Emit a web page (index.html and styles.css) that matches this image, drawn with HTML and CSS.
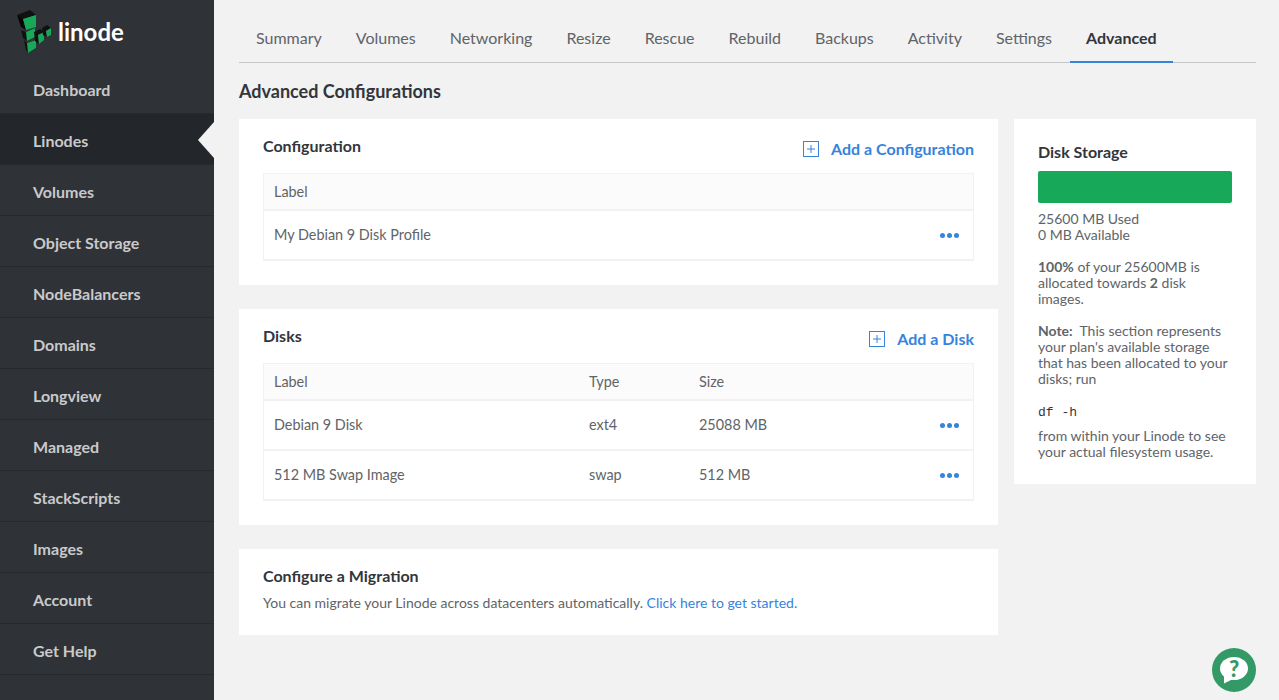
FILE: index.html
```html
<!DOCTYPE html>
<html lang="en">
<head>
  <meta charset="UTF-8" />
  <title>Linode - Advanced</title>
  <link rel="stylesheet" href="styles.css">
</head>
<body>
  <nav class="sidebar">
    <div class="logo">
      <svg class="logo-mark" width="36" height="43" viewBox="0 0 36 43" aria-hidden="true">
        <polygon points="0,5 13,0 19,5 6,9" fill="#111"/>
        <polygon points="0,5 6,9 9,20 4,17" fill="#060606"/>
        <polygon points="6,9 19,5 19,17 9,20" fill="#17a85a"/>
        <polygon points="4,20 9,22 18,18 18,27 10,31 6,28" fill="#111"/>
        <polygon points="9,22 18,18 18,27 10,31" fill="#17a85a"/>
        <polygon points="7,30 10,33 19,30 19,38 11,43 9,40" fill="#111"/>
        <polygon points="10,33 19,30 19,38 11,43" fill="#17a85a"/>
        <polygon points="17,22 23,19 27,22 21,25 22,34 18,31" fill="#111"/>
        <polygon points="21,25 27,22 27,30 22,34" fill="#17a85a"/>
        <polygon points="25,18 30,15 34,18 29,21 30,27 26,25" fill="#111"/>
        <polygon points="29,21 34,18 34,25 30,27" fill="#17a85a"/>
      </svg>
      <span class="logo-text">linode</span>
    </div>
    <a class="nav-item" href="#">Dashboard</a>
    <a class="nav-item active" href="#">Linodes</a>
    <a class="nav-item" href="#">Volumes</a>
    <a class="nav-item" href="#">Object Storage</a>
    <a class="nav-item" href="#">NodeBalancers</a>
    <a class="nav-item" href="#">Domains</a>
    <a class="nav-item" href="#">Longview</a>
    <a class="nav-item" href="#">Managed</a>
    <a class="nav-item" href="#">StackScripts</a>
    <a class="nav-item" href="#">Images</a>
    <a class="nav-item" href="#">Account</a>
    <a class="nav-item" href="#">Get Help</a>
  </nav>

  <main class="main">
    <div class="tabs">
      <a class="tab" href="#">Summary</a>
      <a class="tab" href="#">Volumes</a>
      <a class="tab" href="#">Networking</a>
      <a class="tab" href="#">Resize</a>
      <a class="tab" href="#">Rescue</a>
      <a class="tab" href="#">Rebuild</a>
      <a class="tab" href="#">Backups</a>
      <a class="tab" href="#">Activity</a>
      <a class="tab" href="#">Settings</a>
      <a class="tab active" href="#">Advanced</a>
    </div>

    <h1 class="page-title">Advanced Configurations</h1>

    <div class="columns">
      <div class="left-col">
        <section class="card">
          <div class="card-head">
            <h2>Configuration</h2>
            <a class="add-link" href="#">
              <svg class="plus-box" width="16" height="16" viewBox="0 0 16 16" aria-hidden="true">
                <rect x="0.5" y="0.5" width="15" height="15" fill="none" stroke="#3683dc"/>
                <path d="M8 4v8M4 8h8" stroke="#3683dc" fill="none"/>
              </svg>
              Add a Configuration
            </a>
          </div>
          <div class="data-table">
            <div class="row head">
              <span class="cell col-label">Label</span>
            </div>
            <div class="row">
              <span class="cell col-label">My Debian 9 Disk Profile</span>
              <span class="dots"><i></i><i></i><i></i></span>
            </div>
          </div>
        </section>

        <section class="card">
          <div class="card-head">
            <h2>Disks</h2>
            <a class="add-link" href="#">
              <svg class="plus-box" width="16" height="16" viewBox="0 0 16 16" aria-hidden="true">
                <rect x="0.5" y="0.5" width="15" height="15" fill="none" stroke="#3683dc"/>
                <path d="M8 4v8M4 8h8" stroke="#3683dc" fill="none"/>
              </svg>
              Add a Disk
            </a>
          </div>
          <div class="data-table">
            <div class="row head">
              <span class="cell col-label">Label</span>
              <span class="cell col-type">Type</span>
              <span class="cell col-size">Size</span>
            </div>
            <div class="row">
              <span class="cell col-label">Debian 9 Disk</span>
              <span class="cell col-type">ext4</span>
              <span class="cell col-size">25088 MB</span>
              <span class="dots"><i></i><i></i><i></i></span>
            </div>
            <div class="row">
              <span class="cell col-label">512 MB Swap Image</span>
              <span class="cell col-type">swap</span>
              <span class="cell col-size">512 MB</span>
              <span class="dots"><i></i><i></i><i></i></span>
            </div>
          </div>
        </section>

        <section class="card migration">
          <h2>Configure a Migration</h2>
          <p>You can migrate your Linode across datacenters automatically. <a href="#">Click here to get started.</a></p>
        </section>
      </div>

      <aside class="storage">
        <h3>Disk Storage</h3>
        <div class="storage-bar"></div>
        <p>25600 MB Used<br>0 MB Available</p>
        <p><b>100%</b> of your 25600MB is allocated towards <b>2</b> disk images.</p>
        <p><b>Note:</b>&nbsp; This section represents your plan's available storage that has been allocated to your disks; run</p>
        <p class="cmd"><code>df -h</code></p>
        <p>from within your Linode to see your actual filesystem usage.</p>
      </aside>
    </div>
  </main>

  <a class="help" href="#" aria-label="Help">
    <svg width="44" height="44" viewBox="0 0 44 44" aria-hidden="true">
      <circle cx="22" cy="22" r="22" fill="#339966"/>
      <ellipse cx="22" cy="20.500" rx="14" ry="11.500" fill="#fff"/>
      <path d="M12 27l0 8.500 8-4z" fill="#fff"/>
      <text class="help-mark" x="22" y="29" text-anchor="middle">?</text>
    </svg>
  </a>
</body>
</html>
```

FILE: styles.css
```css
html {
  box-sizing: border-box;
}
*, *:before, *:after {
  box-sizing: inherit;
}

body {
  margin: 0;
  height: 700px;
  overflow: hidden;
  display: flex;
  font-family: Lato, "Open Sans", sans-serif;
  background: #f2f2f2;
  color: #606469;
}

/* Sidebar */
.sidebar {
  width: 214px;
  height: 700px;
  flex-shrink: 0;
  background: #2f3236;
}

.logo {
  height: 63px;
  padding: 10px 0 0 17px;
  display: flex;
  align-items: flex-start;
}
.logo-mark {
  flex-shrink: 0;
}
.logo-text {
  margin: 4px 0 0 5px;
  font-size: 24px;
  line-height: 36px;
  font-weight: 700;
  color: #fff;
}

.nav-item {
  position: relative;
  display: flex;
  align-items: center;
  height: 51px;
  padding: 2px 0 0 33px;
  font-size: 16px;
  font-weight: 700;
  color: #c9cacb;
  text-decoration: none;
  border-bottom: 1px solid #27292d;
}
.nav-item.active {
  background: #23262a;
}
.nav-item.active:after {
  content: "";
  position: absolute;
  right: 0;
  top: 8px;
  border-style: solid;
  border-width: 18px 16px 18px 0;
  border-color: transparent #f2f2f2 transparent transparent;
}

/* Main */
.main {
  flex: 1;
  padding: 14px 23px 0 25px;
}

.tabs {
  display: flex;
  height: 49px;
  border-bottom: 1px solid #c5c6c8;
}
.tab {
  height: 49px;
  padding: 0 17px;
  font-size: 16px;
  line-height: 48px;
  color: #606469;
  text-decoration: none;
}
.tab.active {
  margin: 0 1px;
  padding: 0 16px;
  color: #32363c;
  font-weight: 700;
  border-bottom: 2px solid #3683dc;
}

.page-title {
  margin: 15px 0 15px;
  font-size: 18px;
  line-height: 26px;
  font-weight: 700;
  color: #32363c;
}

.columns {
  display: flex;
  align-items: flex-start;
  gap: 16px;
}
.left-col {
  width: 759px;
  display: flex;
  flex-direction: column;
  gap: 24px;
}

.card {
  background: #fff;
  padding: 16px 24px 24px;
}
.card-head {
  display: flex;
  justify-content: space-between;
  align-items: flex-start;
  height: 38px;
}
.card h2 {
  margin: 0;
  font-size: 16px;
  line-height: 22px;
  font-weight: 700;
  color: #32363c;
}

.add-link {
  display: flex;
  align-items: center;
  gap: 12px;
  margin-top: 3px;
  font-size: 16px;
  line-height: 22px;
  font-weight: 700;
  color: #3683dc;
  text-decoration: none;
}

.data-table {
  border: 1px solid #f2f2f2;
  border-bottom: 0;
  font-size: 14.4px;
}
.row {
  display: flex;
  align-items: center;
  height: 50px;
  padding: 0 14px 2px 10px;
  border-bottom: 2px solid #f2f2f2;
}
.row.head {
  height: 37px;
  padding-bottom: 0;
  background: #fbfbfb;
}
.col-label {
  width: 315px;
}
.col-type {
  width: 110px;
}
.col-size {
  flex: 1;
}

.dots {
  display: flex;
  gap: 2px;
  margin: 2px 0 0 auto;
}
.dots i {
  width: 5px;
  height: 5px;
  border-radius: 50%;
  background: #3683dc;
}

.migration {
  padding: 16px 24px 22px;
}
.migration p {
  margin: 6px 0 0;
  font-size: 14px;
  line-height: 20px;
}
.migration a {
  color: #3683dc;
  text-decoration: none;
}

/* Disk storage panel */
.storage {
  width: 242px;
  background: #fff;
  padding: 22px 24px 24px;
  font-size: 14px;
  line-height: 16px;
}
.storage h3 {
  margin: 0 0 8px;
  font-size: 16px;
  line-height: 22px;
  font-weight: 700;
  color: #32363c;
}
.storage-bar {
  height: 32px;
  border-radius: 2px;
  background: #17a85a;
  margin-bottom: 8px;
}
.storage p {
  margin: 0 0 16px;
}
.storage p.cmd {
  margin-bottom: 7px;
}
.storage p:last-child {
  margin-bottom: 0;
}
.storage code {
  font-family: "Liberation Mono", monospace;
  font-size: 13px;
  color: #32363c;
}

/* Help bubble */
.help {
  position: absolute;
  left: 1212px;
  top: 648px;
  width: 44px;
  height: 44px;
}
.help-mark {
  font-family: Lato, sans-serif;
  font-size: 22px;
  font-weight: 900;
  fill: #339966;
}
```
